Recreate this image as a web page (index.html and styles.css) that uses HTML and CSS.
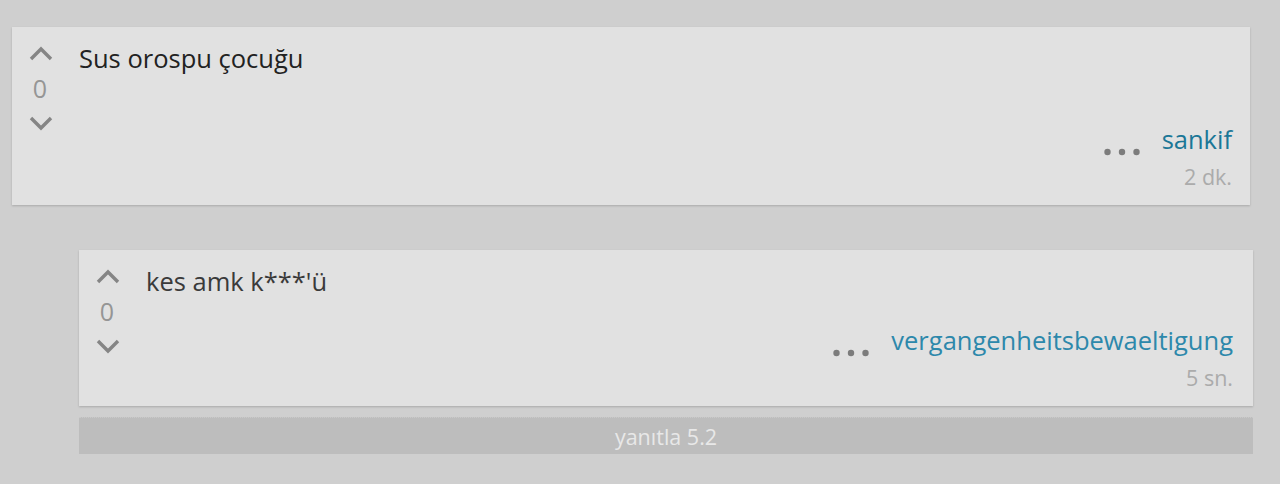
FILE: index.html
```html
<!DOCTYPE html>
<html lang="tr">

<head>
    <meta charset="UTF-8" />
    <title>Yorumlar</title>
    <link rel="stylesheet" href="styles.css">
</head>

<body>

    <div class="thread">

        <!-- Ana yorum -->
        <div class="comment comment-root">
            <div class="vote">
                <svg class="chevron" width="24" height="15" viewBox="0 0 24 15"><polyline points="2,13 12,3 22,13" /></svg>
                <div class="vote-count">0</div>
                <svg class="chevron" width="24" height="15" viewBox="0 0 24 15"><polyline points="2,2 12,12 22,2" /></svg>
            </div>
            <div class="comment-main">
                <div class="comment-text">Sus orospu çocuğu</div>
                <div class="comment-meta">
                    <div class="meta-line">
                        <svg class="dots" width="36" height="8" viewBox="0 0 36 8"><circle cx="3.5" cy="4" r="3.2" /><circle cx="18" cy="4" r="3.2" /><circle cx="32.5" cy="4" r="3.2" /></svg>
                        <a class="author" href="#">sankif</a>
                    </div>
                    <div class="time">2 dk.</div>
                </div>
            </div>
        </div>

        <!-- Yanıtlar -->
        <div class="replies">
            <div class="comment comment-reply">
                <div class="vote">
                    <svg class="chevron" width="24" height="15" viewBox="0 0 24 15"><polyline points="2,13 12,3 22,13" /></svg>
                    <div class="vote-count">0</div>
                    <svg class="chevron" width="24" height="15" viewBox="0 0 24 15"><polyline points="2,2 12,12 22,2" /></svg>
                </div>
                <div class="comment-main">
                    <div class="comment-text">kes amk k***'ü</div>
                    <div class="comment-meta">
                        <div class="meta-line">
                            <svg class="dots" width="36" height="8" viewBox="0 0 36 8"><circle cx="3.5" cy="4" r="3.2" /><circle cx="18" cy="4" r="3.2" /><circle cx="32.5" cy="4" r="3.2" /></svg>
                            <a class="author" href="#">vergangenheitsbewaeltigung</a>
                        </div>
                        <div class="time">5 sn.</div>
                    </div>
                </div>
            </div>

            <button class="reply-button">yanıtla 5.2</button>
        </div>

    </div>

</body>

</html>
```

FILE: styles.css
```css
body {
    margin: 0;
    background-color: #cfcfcf;
    font-family: "Open Sans", "Noto Sans", sans-serif;
}

.thread {
    padding-top: 27px;
}

/* Kart */
.comment {
    display: flex;
    background-color: #e1e1e1;
    box-shadow: 0 1px 2px rgba(0, 0, 0, 0.18);
    padding: 15px 18px 14px 4px;
}

.comment-root {
    margin: 0 30px 0 12px;
    min-height: 149px;
}

.replies {
    margin: 45px 27px 0 79px;
}

.comment-reply {
    min-height: 127px;
    padding-right: 20px;
}

/* Oy sütunu */
.vote {
    width: 48px;
    flex-shrink: 0;
    display: flex;
    flex-direction: column;
    align-items: center;
    padding-top: 4px;
}

.chevron {
    display: block;
    margin-left: 1px;
}

.chevron polyline {
    fill: none;
    stroke: #858585;
    stroke-width: 3.4;
}

.vote-count {
    font-size: 25px;
    line-height: 28px;
    color: #959595;
    margin: 13px 0 14px;
}

/* İçerik */
.comment-main {
    flex: 1;
    display: flex;
    flex-direction: column;
    justify-content: space-between;
    margin-left: 15px;
}

.comment-text {
    font-size: 25.5px;
    line-height: 32px;
    color: #222;
}

.comment-reply .comment-text {
    color: #3a3a3a;
}

.comment-meta {
    display: flex;
    flex-direction: column;
    align-items: flex-end;
}

.meta-line {
    display: flex;
    align-items: center;
}

.dots {
    fill: #7c7c7c;
    margin: 26px 22px 0 0;
}

.author {
    font-size: 25.5px;
    line-height: 32px;
    color: #1b7797;
    text-decoration: none;
}

.comment-reply .author {
    color: #2d88ab;
}

.time {
    font-size: 21.5px;
    line-height: 28px;
    color: #ababab;
    margin-top: 7px;
}

/* Yanıtla butonu */
.reply-button {
    display: block;
    width: 100%;
    margin-top: 11px;
    height: 37px;
    border: none;
    border-top: 1px dotted #c9c9c9;
    background-color: #bdbdbd;
    color: #e8e8e8;
    font-family: "Open Sans", "Noto Sans", sans-serif;
    font-size: 21.5px;
    cursor: pointer;
}
```
